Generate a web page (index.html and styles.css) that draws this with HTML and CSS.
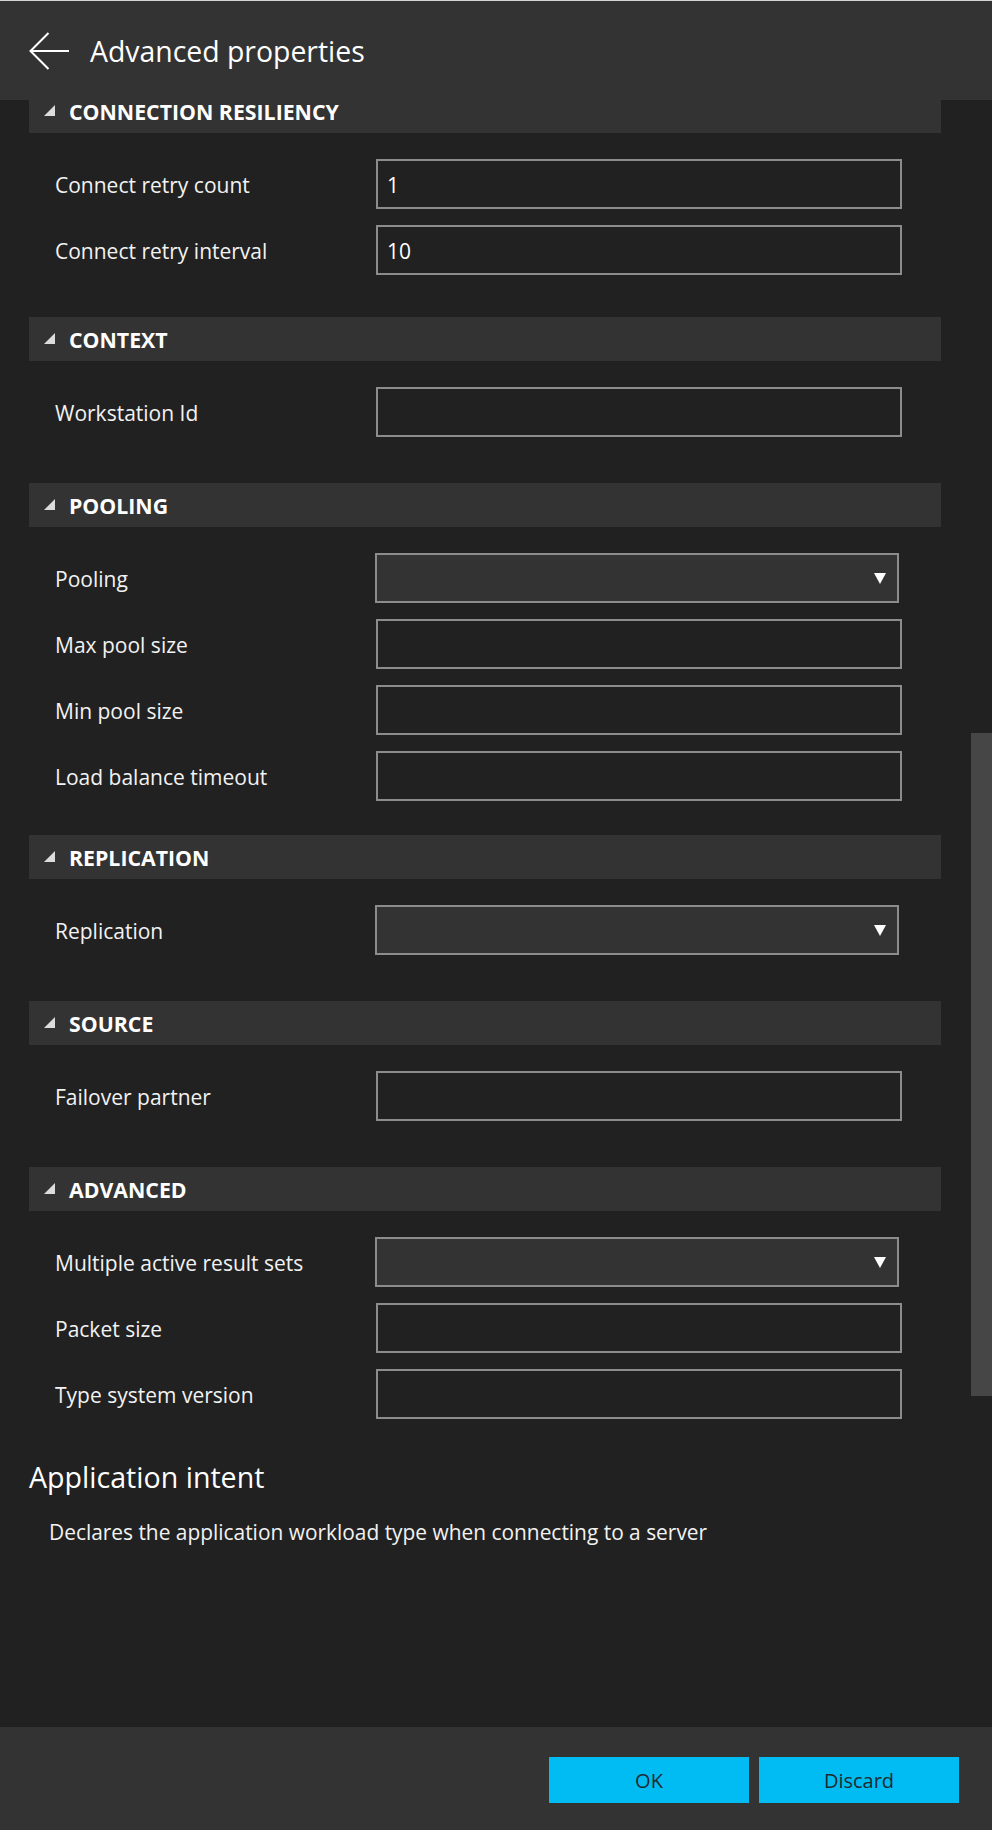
FILE: index.html
```html
<!DOCTYPE html>
<html lang="en">
<head>
<meta charset="utf-8">
<title>Advanced properties</title>
<link rel="stylesheet" href="styles.css">
</head>
<body>
<div class="app">
  <header class="header">
    <svg class="back" width="40" height="38" viewBox="0 0 40 38" aria-hidden="true">
      <path d="M40 19H1.5M19.5 1L1.5 19L19.5 37" fill="none" stroke="#fff" stroke-width="2"/>
    </svg>
    <h1 class="title">Advanced properties</h1>
  </header>

  <main class="main">
    <div class="content">
      <section class="section sec-m42">
        <div class="bar"><svg class="tri" width="11" height="11" viewBox="0 0 11 11"><polygon points="0,11 11,0 11,11" fill="#dcdcdc"/></svg><span class="bar-title">CONNECTION RESILIENCY</span></div>
        <div class="body">
          <div class="row"><span class="label">Connect retry count</span><div class="input">1</div></div>
          <div class="row"><span class="label">Connect retry interval</span><div class="input">10</div></div>
        </div>
      </section>

      <section class="section sec-m46">
        <div class="bar"><svg class="tri" width="11" height="11" viewBox="0 0 11 11"><polygon points="0,11 11,0 11,11" fill="#dcdcdc"/></svg><span class="bar-title">CONTEXT</span></div>
        <div class="body">
          <div class="row"><span class="label">Workstation Id</span><div class="input"></div></div>
        </div>
      </section>

      <section class="section sec-m34">
        <div class="bar"><svg class="tri" width="11" height="11" viewBox="0 0 11 11"><polygon points="0,11 11,0 11,11" fill="#dcdcdc"/></svg><span class="bar-title">POOLING</span></div>
        <div class="body">
          <div class="row"><span class="label">Pooling</span><div class="select"><svg width="12" height="11" viewBox="0 0 12 11"><polygon points="0,0 12,0 6,11" fill="#fff"/></svg></div></div>
          <div class="row"><span class="label">Max pool size</span><div class="input"></div></div>
          <div class="row"><span class="label">Min pool size</span><div class="input"></div></div>
          <div class="row"><span class="label">Load balance timeout</span><div class="input"></div></div>
        </div>
      </section>

      <section class="section sec-m46">
        <div class="bar"><svg class="tri" width="11" height="11" viewBox="0 0 11 11"><polygon points="0,11 11,0 11,11" fill="#dcdcdc"/></svg><span class="bar-title">REPLICATION</span></div>
        <div class="body">
          <div class="row"><span class="label">Replication</span><div class="select"><svg width="12" height="11" viewBox="0 0 12 11"><polygon points="0,0 12,0 6,11" fill="#fff"/></svg></div></div>
        </div>
      </section>

      <section class="section sec-m46">
        <div class="bar"><svg class="tri" width="11" height="11" viewBox="0 0 11 11"><polygon points="0,11 11,0 11,11" fill="#dcdcdc"/></svg><span class="bar-title">SOURCE</span></div>
        <div class="body">
          <div class="row"><span class="label">Failover partner</span><div class="input"></div></div>
        </div>
      </section>

      <section class="section">
        <div class="bar"><svg class="tri" width="11" height="11" viewBox="0 0 11 11"><polygon points="0,11 11,0 11,11" fill="#dcdcdc"/></svg><span class="bar-title">ADVANCED</span></div>
        <div class="body">
          <div class="row"><span class="label">Multiple active result sets</span><div class="select"><svg width="12" height="11" viewBox="0 0 12 11"><polygon points="0,0 12,0 6,11" fill="#fff"/></svg></div></div>
          <div class="row"><span class="label">Packet size</span><div class="input"></div></div>
          <div class="row"><span class="label">Type system version</span><div class="input"></div></div>
        </div>
      </section>

      <div class="info">
        <h2 class="info-title">Application intent</h2>
        <p class="info-desc">Declares the application workload type when connecting to a server</p>
      </div>
    </div>
    <div class="thumb"></div>
  </main>

  <footer class="footer">
    <button class="btn">OK</button>
    <button class="btn">Discard</button>
  </footer>
</div>
</body>
</html>
```

FILE: styles.css
```css
* { box-sizing: border-box; }

html, body {
  margin: 0;
  padding: 0;
  background: #212121;
}

body {
  font-family: "Open Sans", "Noto Sans", sans-serif;
  color: #fff;
}

.app {
  height: 1830px;
  display: flex;
  flex-direction: column;
}

.header {
  height: 100px;
  flex: 0 0 100px;
  background: #333;
  border-top: 1px solid #d4d4d4;
  display: flex;
  align-items: center;
  padding-left: 29px;
  position: relative;
  z-index: 2;
}

.back { display: block; flex: 0 0 auto; }

.title {
  margin: 1px 0 0 21px;
  font-size: 28.4px;
  font-weight: 400;
  line-height: 36px;
  color: #fff;
}

.main {
  flex: 1 1 auto;
  position: relative;
  overflow: hidden;
}

.content {
  margin-top: -11px;
  padding: 0 51px 0 29px;
}

.section.sec-m42 { margin-bottom: 42px; }
.section.sec-m46 { margin-bottom: 46px; }
.section.sec-m34 { margin-bottom: 34px; }

.bar {
  height: 44px;
  background: #333;
  display: flex;
  align-items: center;
  padding-left: 15px;
}

.tri { display: block; margin-top: -2px; }

.bar-title {
  margin: 2px 0 0 14px;
  font-size: 21.3px;
  font-weight: 700;
  line-height: 22px;
  color: #fff;
}

.body {
  padding-top: 26px;
  display: flex;
  flex-direction: column;
  gap: 16px;
}

.row {
  height: 50px;
  display: flex;
  align-items: center;
  padding-left: 26px;
}

.label {
  width: 320px;
  flex: 0 0 320px;
  margin-top: 1px;
  font-size: 21px;
  line-height: 28px;
  color: #f2f2f2;
}

.input {
  width: 526px;
  height: 50px;
  margin-left: 1px;
  border: 2px solid #8c8c8c;
  background: #212121;
  display: flex;
  align-items: center;
  padding: 1px 9px 0;
  font-size: 21px;
  color: #fff;
}

.select {
  width: 524px;
  height: 50px;
  border: 2px solid #8c8c8c;
  background: #333;
  display: flex;
  align-items: center;
  justify-content: flex-end;
  padding-right: 11px;
}

.select svg { display: block; }

.info {
  padding-top: 40px;
}

.info-title {
  margin: 0;
  font-size: 28.6px;
  font-weight: 400;
  line-height: 36px;
  color: #fff;
}

.info-desc {
  margin: 23px 0 0 20px;
  font-size: 20.9px;
  line-height: 28px;
  color: #f2f2f2;
}

.thumb {
  position: absolute;
  right: 0;
  top: 633px;
  width: 21px;
  height: 663px;
  background: #464646;
}

.footer {
  height: 103px;
  flex: 0 0 103px;
  background: #333;
  display: flex;
  justify-content: flex-end;
  align-items: flex-start;
  gap: 10px;
  padding: 30px 33px 0 0;
}

.btn {
  width: 200px;
  height: 46px;
  border: 0;
  margin: 0;
  background: #00bcf2;
  color: #1f2a30;
  font-family: "Open Sans", "Noto Sans", sans-serif;
  font-size: 20px;
  padding: 0;
}
```
